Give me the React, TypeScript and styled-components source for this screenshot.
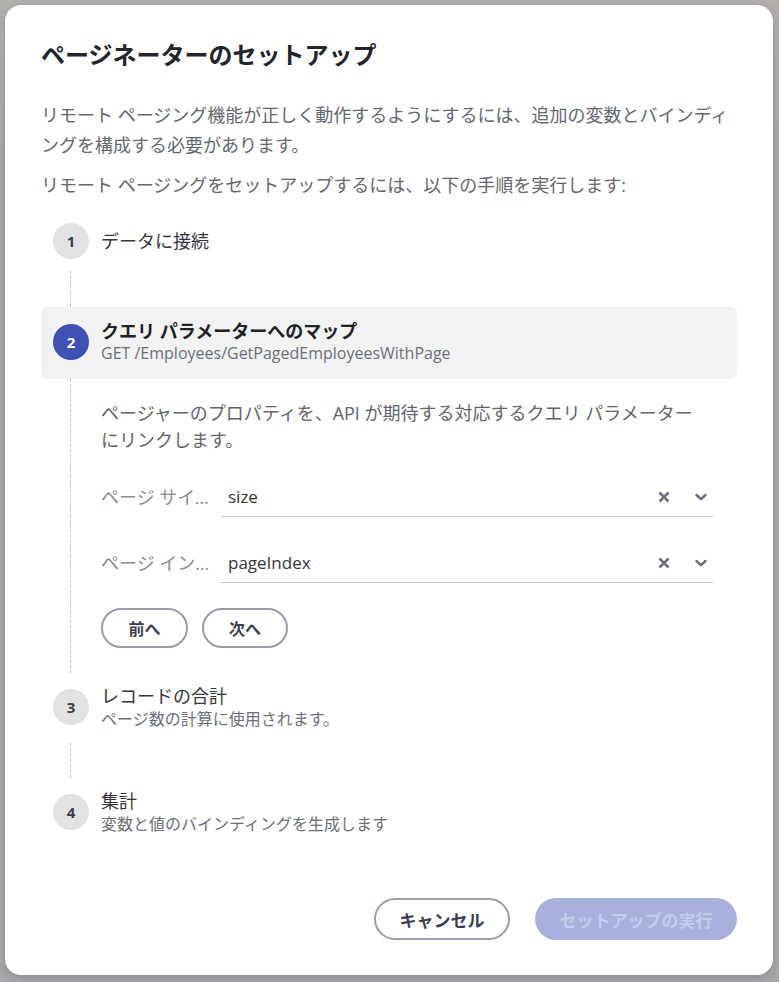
import React from "react";
import styled, { createGlobalStyle } from "styled-components";

const Global = createGlobalStyle`
  html, body { margin: 0; padding: 0; }
  body {
    background: #a8a8ad;
    font-family: "Open Sans", "Noto Sans CJK JP", sans-serif;
    -webkit-font-smoothing: antialiased;
  }
  * { box-sizing: border-box; }
`;

const Backdrop = styled.div`
  position: relative;
  width: 779px;
  height: 982px;
  padding: 5px 6px 7px 5px;
  background: linear-gradient(180deg, #b3aeac 0px, #aeaeb2 60px, #a8a8ad 200px);
`;

const Dialog = styled.div`
  width: 768px;
  height: 970px;
  background: #ffffff;
  border-radius: 16px;
  box-shadow: 0 3px 10px rgba(0, 0, 0, 0.18);
  padding: 34px 36px 35px 36px;
  display: flex;
  flex-direction: column;
`;

const Title = styled.h1`
  margin: 0;
  font-size: 24px;
  line-height: 32px;
  font-weight: 600;
  color: #22252b;
`;

const Para = styled.p<{ $mt: number }>`
  margin: ${(p) => p.$mt}px 0 0;
  font-size: 18px;
  line-height: 30px;
  color: #64676f;
`;

const Steps = styled.div`
  margin-top: 23px;
  display: flex;
  flex-direction: column;
`;

const StepHeader = styled.div<{ $active?: boolean; $mt?: number }>`
  display: grid;
  grid-template-columns: 60px 1fr;
  align-items: center;
  margin-top: ${(p) => p.$mt ?? 0}px;
  padding: ${(p) => (p.$active ? "13px 0 15px" : "0")};
  background: ${(p) => (p.$active ? "#f1f2f2" : "transparent")};
  border-radius: 6px;
`;

const Circle = styled.div<{ $active?: boolean }>`
  width: 36px;
  height: 36px;
  margin-left: 12px;
  border-radius: 50%;
  background: ${(p) => (p.$active ? "#3f51b5" : "#e1e2e2")};
  color: ${(p) => (p.$active ? "#ffffff" : "#3c3f4b")};
  font-family: "Open Sans", sans-serif;
  font-weight: 700;
  font-size: 15px;
  display: flex;
  align-items: center;
  justify-content: center;
`;

const StepText = styled.div`
  display: flex;
  flex-direction: column;
`;

const StepTitle = styled.div<{ $bold?: boolean }>`
  font-size: 18px;
  line-height: ${(p) => (p.$bold ? 22 : 24)}px;
  font-weight: ${(p) => (p.$bold ? 700 : 400)};
  color: ${(p) => (p.$bold ? "#1f2127" : "#34363c")};
`;

const StepSub = styled.div`
  font-size: 16px;
  line-height: 22px;
  color: #6c6f7a;
`;

const Connector = styled.div<{ $mt: number; $h: number }>`
  margin: ${(p) => p.$mt}px 0 0 29px;
  height: ${(p) => p.$h}px;
  border-left: 1px dashed #c2c2c4;
`;

const StepBody = styled.div`
  display: grid;
  grid-template-columns: 60px 1fr;
`;

const BodyRail = styled.div`
  margin-left: 29px;
  border-left: 1px dashed #c2c2c4;
`;

const BodyContent = styled.div`
  padding: 21px 24px 25px 0;
  display: flex;
  flex-direction: column;
`;

const BodyText = styled.p`
  margin: 0;
  padding-right: 14px;
  font-size: 18px;
  line-height: 27px;
  color: #61646c;
`;

const Field = styled.div<{ $mt: number }>`
  margin-top: ${(p) => p.$mt}px;
  display: grid;
  grid-template-columns: 110px 1fr;
  column-gap: 10px;
  align-items: end;
`;

const FieldLabel = styled.div`
  font-size: 18px;
  line-height: 40px;
  color: #8b8d94;
  white-space: nowrap;
  overflow: hidden;
  text-overflow: ellipsis;
`;

const Select = styled.div`
  height: 40px;
  border-bottom: 1px solid #c6c6c8;
  display: flex;
  align-items: center;
  padding: 0 6px 0 7px;
`;

const SelectValue = styled.span`
  flex: 1;
  font-size: 17px;
  color: #34363c;
`;

const IconBtn = styled.span<{ $ml: number }>`
  margin-left: ${(p) => p.$ml}px;
  display: flex;
  align-items: center;
  justify-content: center;
  width: 12px;
  height: 12px;
`;

const NavRow = styled.div`
  margin-top: 25px;
  display: flex;
  gap: 14px;
`;

const OutlineButton = styled.button<{ $w: number; $h: number; $fs: number }>`
  width: ${(p) => p.$w}px;
  height: ${(p) => p.$h}px;
  border: 2.5px solid #999cae;
  border-radius: 999px;
  background: #ffffff;
  color: #3c3f52;
  font-family: "Open Sans", "Noto Sans CJK JP", sans-serif;
  font-size: ${(p) => p.$fs}px;
  font-weight: 700;
  padding: 0;
  cursor: pointer;
`;

const Footer = styled.div`
  margin-top: auto;
  display: flex;
  justify-content: flex-end;
  gap: 25px;
`;

const PrimaryButton = styled.button`
  width: 202px;
  height: 42px;
  border: none;
  border-radius: 999px;
  background: #a8b0dc;
  color: #c6cbea;
  font-family: "Open Sans", "Noto Sans CJK JP", sans-serif;
  font-size: 17px;
  font-weight: 700;
  padding: 0;
`;

const ClearIcon = () => (
  <svg width="12" height="12" viewBox="0 0 12 12">
    <path d="M1.5 1.5 L10.5 10.5 M10.5 1.5 L1.5 10.5" stroke="#6b6e7b" strokeWidth="2.6" strokeLinecap="butt" />
  </svg>
);

const ChevronIcon = () => (
  <svg width="12" height="12" viewBox="0 0 12 12">
    <path d="M1.5 4 L6 8.2 L10.5 4" stroke="#6b6e7b" strokeWidth="2.4" fill="none" strokeLinejoin="round" strokeLinecap="round" />
  </svg>
);

const fields = [
  { label: "ページ サイズ", value: "size", mt: 23 },
  { label: "ページ インデックス", value: "pageIndex", mt: 26 },
];

export default function App() {
  return (
    <>
      <Global />
      <Backdrop>
        <Dialog>
          <Title>ページネーターのセットアップ</Title>
          <Para $mt={29}>
            リモート ページング機能が正しく動作するようにするには、追加の変数とバインディングを構成する必要があります。
          </Para>
          <Para $mt={10}>リモート ページングをセットアップするには、以下の手順を実行します:</Para>

          <Steps>
            <StepHeader>
              <Circle>1</Circle>
              <StepText>
                <StepTitle>データに接続</StepTitle>
              </StepText>
            </StepHeader>
            <Connector $mt={12} $h={36} />

            <StepHeader $active>
              <Circle $active>2</Circle>
              <StepText>
                <StepTitle $bold>クエリ パラメーターへのマップ</StepTitle>
                <StepSub>GET /Employees/GetPagedEmployeesWithPage</StepSub>
              </StepText>
            </StepHeader>
            <StepBody>
              <BodyRail />
              <BodyContent>
                <BodyText>
                  ページャーのプロパティを、API が期待する対応するクエリ パラメーターにリンクします。
                </BodyText>
                {fields.map((f) => (
                  <Field key={f.value} $mt={f.mt}>
                    <FieldLabel>{f.label}</FieldLabel>
                    <Select>
                      <SelectValue>{f.value}</SelectValue>
                      <IconBtn $ml={0}>
                        <ClearIcon />
                      </IconBtn>
                      <IconBtn $ml={25}>
                        <ChevronIcon />
                      </IconBtn>
                    </Select>
                  </Field>
                ))}
                <NavRow>
                  <OutlineButton $w={87} $h={40} $fs={16}>前へ</OutlineButton>
                  <OutlineButton $w={86} $h={40} $fs={16}>次へ</OutlineButton>
                </NavRow>
              </BodyContent>
            </StepBody>

            <StepHeader $mt={11}>
              <Circle>3</Circle>
              <StepText>
                <StepTitle>レコードの合計</StepTitle>
                <StepSub>ページ数の計算に使用されます。</StepSub>
              </StepText>
            </StepHeader>
            <Connector $mt={13} $h={35} />
            <StepHeader $mt={11}>
              <Circle>4</Circle>
              <StepText>
                <StepTitle>集計</StepTitle>
                <StepSub>変数と値のバインディングを生成します</StepSub>
              </StepText>
            </StepHeader>
          </Steps>

          <Footer>
            <OutlineButton $w={136} $h={42} $fs={17}>キャンセル</OutlineButton>
            <PrimaryButton disabled>セットアップの実行</PrimaryButton>
          </Footer>
        </Dialog>
      </Backdrop>
    </>
  );
}
